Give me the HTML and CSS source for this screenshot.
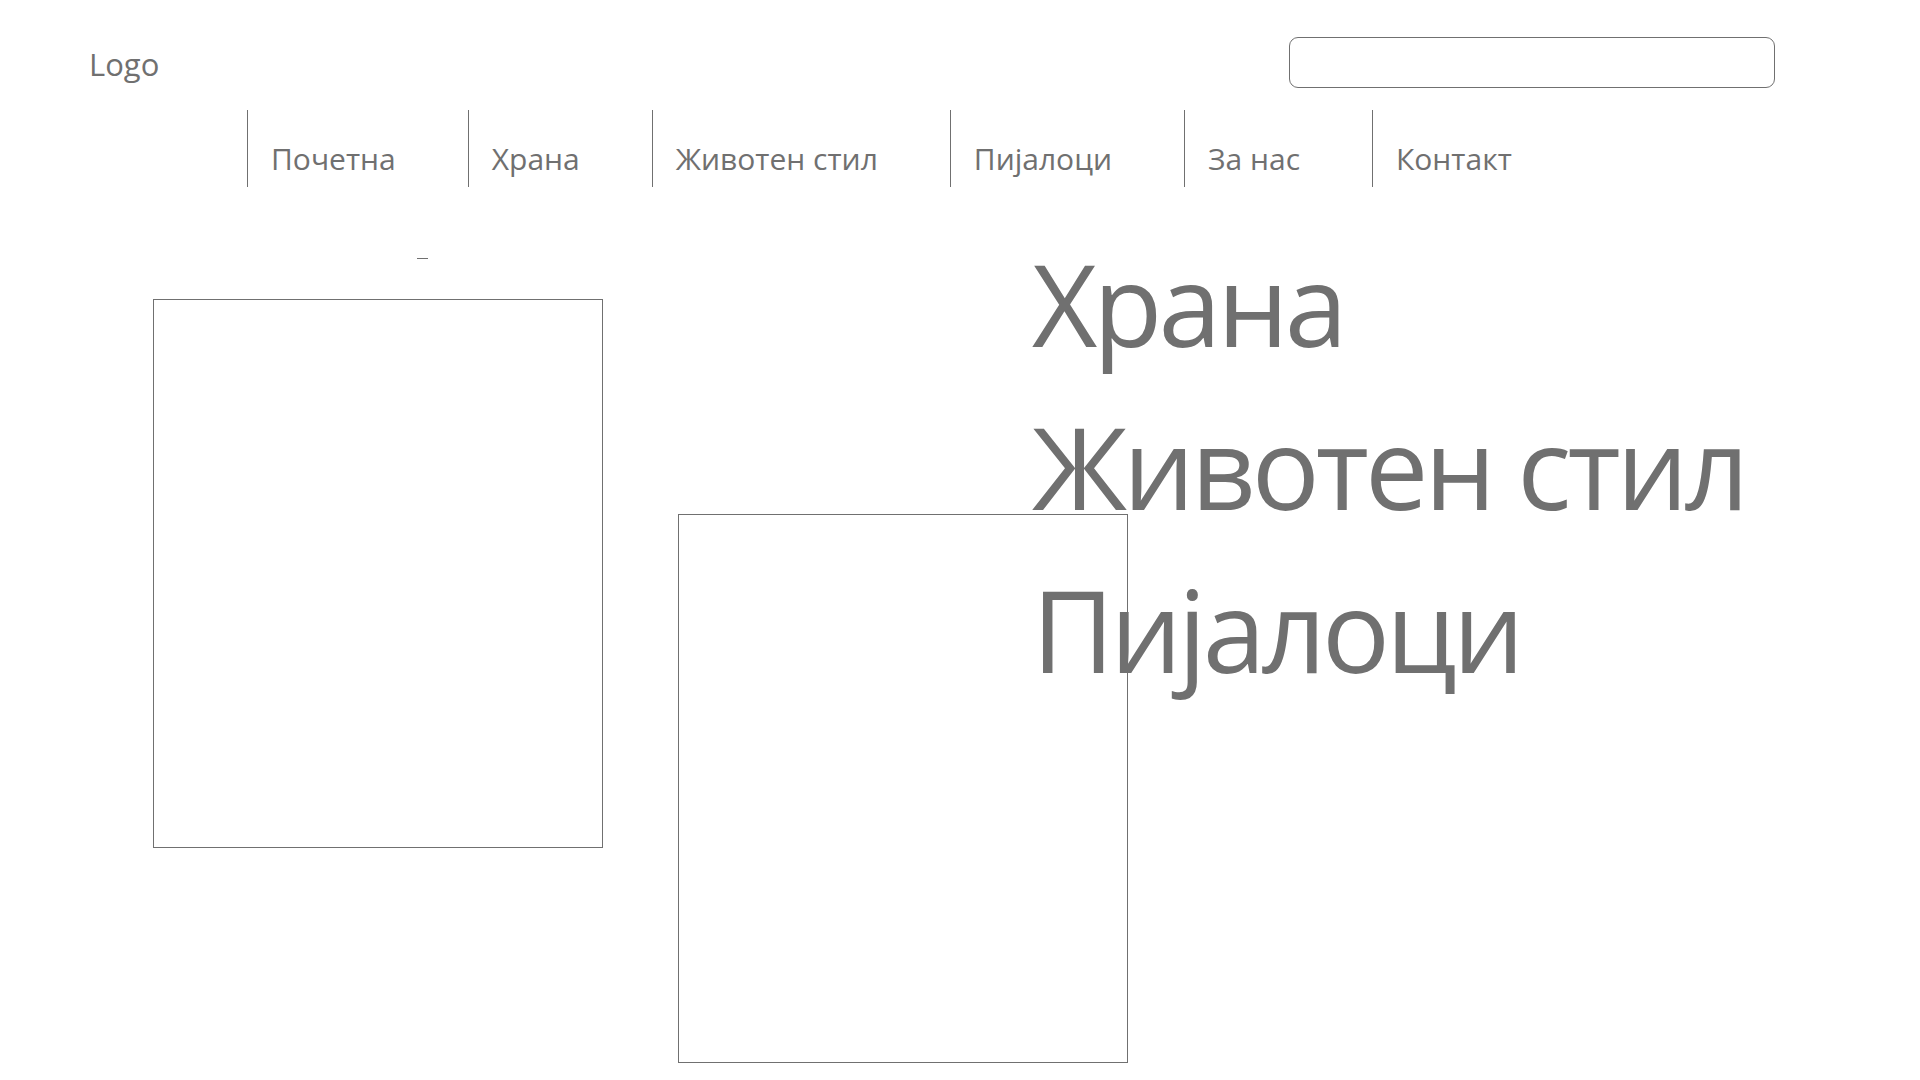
FILE: index.html
```html
<!DOCTYPE html>
<html lang="mk">
<head>
<meta charset="utf-8">
<title>Logo</title>
<link rel="stylesheet" href="styles.css">
</head>
<body>
<header class="header">
  <div class="logo">Logo</div>
  <div class="search"></div>
</header>
<nav class="nav">
  <a class="nav-item" href="#">Почетна</a>
  <a class="nav-item" href="#">Храна</a>
  <a class="nav-item" href="#">Животен стил</a>
  <a class="nav-item" href="#">Пијалоци</a>
  <a class="nav-item" href="#">За нас</a>
  <a class="nav-item" href="#">Контакт</a>
</nav>
<main class="main">
  <div class="col-left">
    <span class="dash"></span>
    <div class="card"></div>
  </div>
  <div class="col-mid">
    <div class="card"></div>
  </div>
  <div class="col-text">
    <div class="big">Храна</div>
    <div class="big">Животен стил</div>
    <div class="big">Пијалоци</div>
  </div>
</main>
</body>
</html>
```
FILE: styles.css
```css
html, body {
  margin: 0;
  padding: 0;
  background: #ffffff;
}
body {
  font-family: "Open Sans", "Noto Sans", sans-serif;
  color: #707070;
  overflow: hidden;
  height: 1080px;
}
.header {
  display: flex;
  align-items: flex-start;
  padding: 37px 0 0 89px;
}
.logo {
  font-size: 31px;
  line-height: 44px;
  margin-top: 5px;
}
.search {
  margin-left: auto;
  margin-right: 145px;
  width: 484px;
  height: 49px;
  border: 1px solid #707070;
  border-radius: 9px;
}
.nav {
  display: flex;
  margin: 22px 0 0 247px;
}
.nav-item {
  display: block;
  border-left: 1px solid #707070;
  height: 77px;
  box-sizing: border-box;
  padding: 27px 72px 0 23px;
  font-size: 30px;
  line-height: 44px;
  color: #707070;
  text-decoration: none;
  white-space: nowrap;
}
.main {
  display: flex;
  align-items: flex-start;
  padding-left: 153px;
}
.col-left {
  display: flex;
  flex-direction: column;
  width: 450px;
}
.dash {
  display: block;
  width: 11px;
  height: 0;
  border-top: 1px solid #707070;
  margin: 71px 0 0 264px;
}
.card {
  width: 448px;
  height: 547px;
  border: 1px solid #707070;
}
.col-left .card {
  margin-top: 40px;
}
.col-mid {
  margin: 327px 0 0 75px;
}
.col-text {
  margin: 35px 0 0 -96px;
  position: relative;
}
.big {
  font-size: 113px;
  line-height: 163px;
  letter-spacing: -4px;
  white-space: nowrap;
}
```
